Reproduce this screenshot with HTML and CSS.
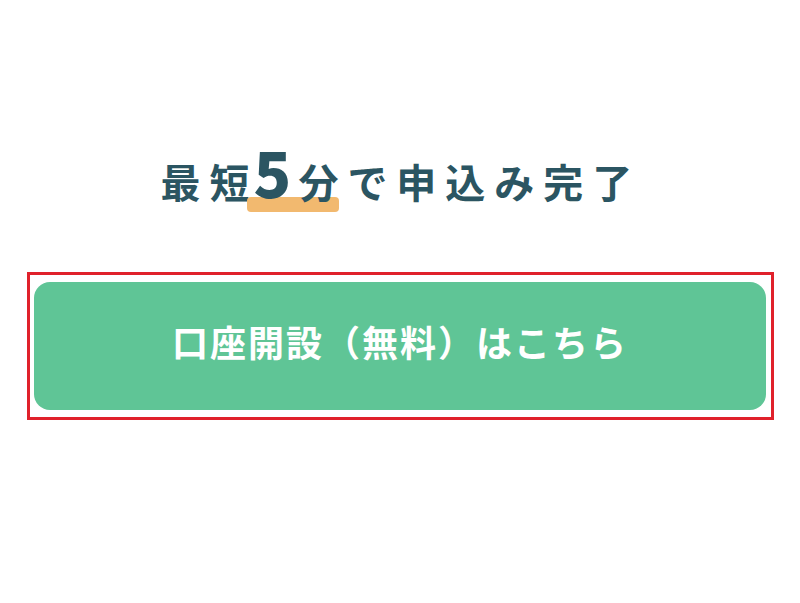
FILE: index.html
```html
<!DOCTYPE html>
<html lang="ja">
<head>
<meta charset="utf-8">
<title>口座開設</title>
<link rel="stylesheet" href="styles.css">
</head>
<body>
<main class="page">
  <h2 class="lead">最<span class="tight">短</span><span class="mark"><span class="big">5</span>分</span>で申込み完了</h2>
  <div class="frame">
    <a class="cta" href="#">口座開設（無料）はこちら</a>
  </div>
</main>
</body>
</html>
```

FILE: styles.css
```css
html, body {
  margin: 0;
  padding: 0;
  background: #ffffff;
}
body {
  font-family: "Noto Sans CJK JP", "Noto Sans", sans-serif;
}
.page {
  display: flex;
  flex-direction: column;
  align-items: flex-start;
  padding-top: 140px;
}
.lead {
  align-self: center;
  margin: 0 0 0 2px;
  font-size: 40px;
  font-weight: 700;
  line-height: 60px;
  letter-spacing: 9px;
  color: #2b5562;
  white-space: nowrap;
}
.tight {
  letter-spacing: 0;
}
.mark {
  position: relative;
  display: inline-block;
  isolation: isolate;
  margin-left: 4px;
}
.mark::before {
  content: "";
  position: absolute;
  left: -7px;
  right: 8px;
  bottom: -1px;
  height: 15px;
  border-radius: 4px;
  background: #f2b96f;
  z-index: -1;
}
.big {
  font-size: 62px;
  font-weight: 900;
  line-height: 1;
  letter-spacing: 7px;
}
.frame {
  margin: 61px 0 0 27px;
  width: 732px;
  border: 3px solid #e0212b;
  padding: 7px 5px 7px 4px;
}
.cta {
  display: flex;
  align-items: center;
  justify-content: center;
  height: 128px;
  border-radius: 16px;
  background: #5fc596;
  color: #ffffff;
  font-size: 36px;
  font-weight: 700;
  letter-spacing: 2px;
  text-decoration: none;
  padding-bottom: 11px;
  box-sizing: border-box;
}
```
